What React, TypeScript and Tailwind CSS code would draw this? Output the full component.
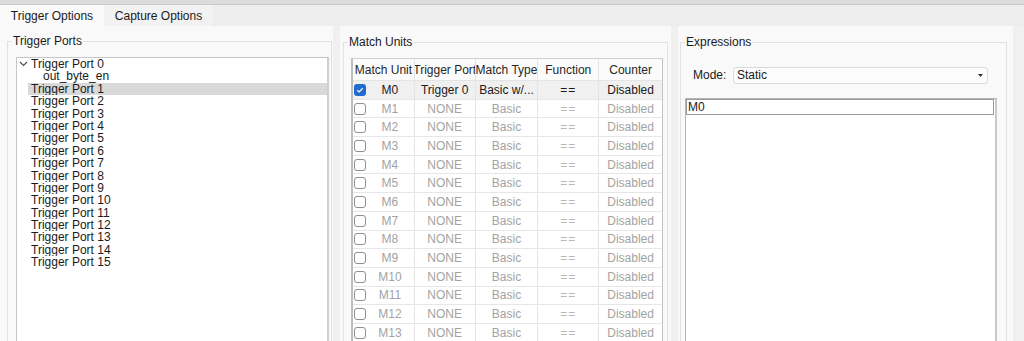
import React from "react";

const ports = Array.from({ length: 16 }, (_, i) => `Trigger Port ${i}`);

const units = Array.from({ length: 16 }, (_, i) => ({
  name: `M${i}`,
  enabled: i === 0,
  port: i === 0 ? "Trigger 0" : "NONE",
  type: i === 0 ? "Basic w/..." : "Basic",
}));

const colWidths = ["w-[62px]", "w-[61px]", "w-[63px]", "w-[61px]", "w-[63px]"];

function GroupBox({
  title,
  className,
  children,
}: {
  title: string;
  className: string;
  children: React.ReactNode;
}) {
  return (
    <fieldset className={`border border-[#e1e1e1] ${className}`}>
      <legend className="ml-[4px] px-[1px] leading-[14px] text-[#1b1b1b]">{title}</legend>
      {children}
    </fieldset>
  );
}

function Chevron() {
  return (
    <svg width="9" height="6" viewBox="0 0 9 6" className="shrink-0">
      <polyline points="1,1 4.5,4.5 8,1" fill="none" stroke="#4a4a4a" strokeWidth="1.1" />
    </svg>
  );
}

function TriggerPorts() {
  return (
    <div className="w-[313px] h-[320px] ml-[8px] mt-[9px] bg-white border border-[#c6c6c6] border-r-[2px] border-r-[#cfcfcf]">
      <div className="flex items-center h-[12.4px] leading-[12.4px]">
        <span className="w-[14px] pl-[2px] flex items-center">
          <Chevron />
        </span>
        <span>{ports[0]}</span>
      </div>
      <div className="h-[12.4px] leading-[12.4px] pl-[26px] overflow-hidden">out_byte_en</div>
      {ports.slice(1).map((p, i) => (
        <div
          key={p}
          className={`h-[12.4px] leading-[12.4px] ml-[11px] pl-[3px] overflow-hidden ${
            i === 0 ? "bg-[#d9d9d9]" : ""
          }`}
        >
          {p}
        </div>
      ))}
    </div>
  );
}

function CheckBox({ checked }: { checked: boolean }) {
  if (checked) {
    return (
      <span className="w-[12px] h-[12px] rounded-[3px] bg-[#1f6bd0] flex items-center justify-center shrink-0">
        <svg width="10" height="10" viewBox="0 0 10 10">
          <polyline points="2.2,5.2 4.2,7 7.8,3.2" fill="none" stroke="white" strokeWidth="1.2" />
        </svg>
      </span>
    );
  }
  return <span className="w-[12px] h-[12px] rounded-[3px] border border-[#8f8f8f] bg-white shrink-0" />;
}

function MatchTable() {
  const headers = ["Match Unit", "Trigger Port", "Match Type", "Function", "Counter"];
  return (
    <div className="w-[312px] ml-[7px] mt-[9px] border-l-[2px] border-l-[#bdbdbd] border-r border-r-[#c4c4c4] border-t border-t-[#d0d0d0] bg-white">
      <div className="flex h-[22px] bg-[#fbfbfb] border-b border-[#e4e4e4] text-[#262626]">
        {headers.map((h, i) => (
          <div
            key={h}
            className={`${colWidths[i]} ${
              i < 4 ? "border-r border-[#e4e4e4]" : ""
            } flex items-center justify-center overflow-hidden whitespace-nowrap`}
          >
            <span className="shrink-0">{h}</span>
          </div>
        ))}
      </div>
      {units.map((u) => {
        const txt = u.enabled ? "text-[#1b1b1b]" : "text-[#a3a3a3]";
        const eq = u.enabled ? "text-[#1b1b1b]" : "text-[#b9b9b9]";
        const cells = [u.port, u.type, "==", "Disabled"];
        return (
          <div
            key={u.name}
            className={`flex h-[18.7px] border-b border-[#e6e6e6] ${u.enabled ? "bg-[#f0f0f0]" : ""}`}
          >
            <div className={`${colWidths[0]} border-r border-[#e4e4e4] flex items-center pl-[1px]`}>
              <CheckBox checked={u.enabled} />
              <span className={`flex-1 text-center ${txt}`}>{u.name}</span>
            </div>
            {cells.map((c, i) => (
              <div
                key={i}
                className={`${colWidths[i + 1]} ${
                  i < 3 ? "border-r border-[#e4e4e4]" : ""
                } flex items-center justify-center overflow-hidden whitespace-nowrap ${
                  i === 2 ? `${eq} tracking-[1px]` : txt
                }`}
              >
                {c}
              </div>
            ))}
          </div>
        );
      })}
    </div>
  );
}

function Expressions() {
  return (
    <>
      <div className="flex items-center mt-[17px] pl-[12px]">
        <span className="w-[40px] text-[#1b1b1b]">Mode:</span>
        <div className="w-[255px] h-[17px] bg-[#fcfcfc] border border-[#dadada] rounded-[3px] flex items-center pl-[3px] pr-[4px]">
          <span className="flex-1">Static</span>
          <svg width="5" height="3" viewBox="0 0 5 3">
            <polygon points="0,0 5,0 2.5,3" fill="#333" />
          </svg>
        </div>
      </div>
      <div className="w-[312px] h-[260px] ml-[4px] mt-[14px] bg-white border border-[#b3b3b8] border-r-[2px] border-r-[#c9c9ce] pt-[0px] px-[0px]">
        <div className="h-[16px] border border-[#9a9a9a] leading-[14px] pl-[1px] mr-[1px]">M0</div>
      </div>
    </>
  );
}

export default function App() {
  return (
    <div className="w-[1024px] h-[341px] overflow-hidden bg-[#f0f0f0] text-[12px] text-[#1b1b1b] font-['Liberation_Sans',Arial,sans-serif]">
      <div className="h-[5px] bg-[#dcdcdc] border-b border-[#cacaca]" />
      <div className="flex h-[21px] bg-[#ededed]">
        <div className="w-[104px] bg-[#fafafa] flex items-center justify-center">Trigger Options</div>
        <div className="w-[109px] bg-[#f2f2f2] flex items-center justify-center">Capture Options</div>
      </div>
      <div className="flex gap-[7px] h-[400px]">
        <div className="w-[333px] bg-[#f9f9f9] pl-[7px] pt-[8px]">
          <GroupBox title="Trigger Ports" className="w-[325px] h-[380px]">
            <TriggerPorts />
          </GroupBox>
        </div>
        <div className="w-[331px] bg-[#f9f9f9] pl-[3px] pt-[9px]">
          <GroupBox title="Match Units" className="w-[325px] h-[380px]">
            <MatchTable />
          </GroupBox>
        </div>
        <div className="w-[335px] bg-[#f9f9f9] pl-[2px] pt-[9px]">
          <GroupBox title="Expressions" className="w-[327px] h-[380px]">
            <Expressions />
          </GroupBox>
        </div>
      </div>
    </div>
  );
}
